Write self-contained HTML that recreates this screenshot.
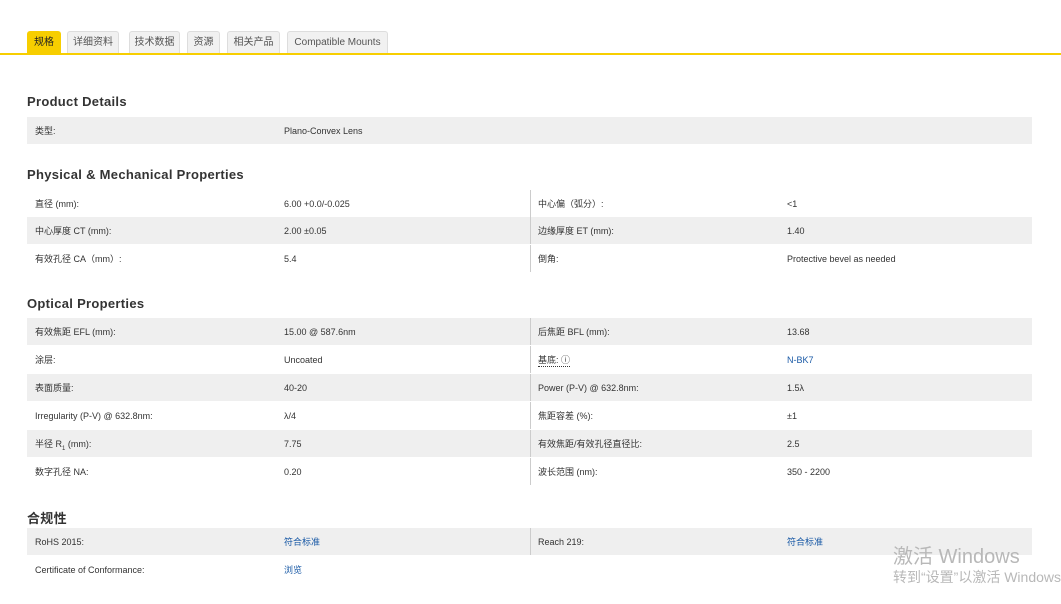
<!DOCTYPE html>
<html><head><meta charset="utf-8"><style>
*{margin:0;padding:0;box-sizing:border-box}
body{width:1061px;height:604px;background:#fff;font-family:"Liberation Sans","Noto Sans CJK SC",sans-serif;color:#333;position:relative;overflow:hidden;font-size:9px}
.tab{position:absolute;top:31px;height:23px;border:1px solid #ddd;border-bottom:none;background:#f1f1f1;border-radius:3px 3px 0 0;font-size:10px;line-height:22px;text-align:center;color:#555}
.tab.a{background:#f7ce00;border-color:#f7ce00;color:#222}
.line{position:absolute;top:53px;left:0;width:1061px;height:2px;background:#f7ce00}
h2{position:absolute;left:27px;font-size:13px;font-weight:bold;color:#333;letter-spacing:.3px}
.r{position:absolute;left:27px;width:1005px;height:27px;line-height:29px}
.g{background:#efefef}
.r span{position:absolute;top:0}
.c1{left:8px}.c2{left:257px}.c3{left:511px}.c4{left:760px}
.dv{position:absolute;left:503px;top:0;width:1px;height:27px;background:#ccc}
a{color:#1a5aa6;text-decoration:none}
.wm{position:absolute;left:893px;color:#b8b8b8;white-space:nowrap}
</style></head><body>
<div class="tab a" style="left:27px;width:34px">规格</div>
<div class="tab" style="left:67px;width:52px">详细资料</div>
<div class="tab" style="left:129px;width:51px">技术数据</div>
<div class="tab" style="left:187px;width:33px">资源</div>
<div class="tab" style="left:227px;width:53px">相关产品</div>
<div class="tab" style="left:287px;width:101px">Compatible Mounts</div>
<div class="line"></div>

<h2 style="top:94px">Product Details</h2>
<div class="r g" style="top:117px"><span class="c1">类型:</span><span class="c2">Plano-Convex Lens</span></div>

<h2 style="top:167px">Physical &amp; Mechanical Properties</h2>
<div class="r" style="top:190px"><span class="c1">直径 (mm):</span><span class="c2">6.00 +0.0/-0.025</span><div class="dv"></div><span class="c3">中心偏（弧分）:</span><span class="c4">&lt;1</span></div>
<div class="r g" style="top:217px"><span class="c1">中心厚度 CT (mm):</span><span class="c2">2.00 ±0.05</span><div class="dv"></div><span class="c3">边缘厚度 ET (mm):</span><span class="c4">1.40</span></div>
<div class="r" style="top:245px"><span class="c1">有效孔径 CA（mm）:</span><span class="c2">5.4</span><div class="dv"></div><span class="c3">倒角:</span><span class="c4">Protective bevel as needed</span></div>

<h2 style="top:296px">Optical Properties</h2>
<div class="r g" style="top:318px"><span class="c1">有效焦距 EFL (mm):</span><span class="c2">15.00 @ 587.6nm</span><div class="dv"></div><span class="c3">后焦距 BFL (mm):</span><span class="c4">13.68</span></div>
<div class="r" style="top:346px"><span class="c1">涂层:</span><span class="c2">Uncoated</span><div class="dv"></div><span class="c3" style="border-bottom:1px dotted #333;line-height:12px;top:8px">基底: ⓘ</span><span class="c4"><a>N-BK7</a></span></div>
<div class="r g" style="top:374px"><span class="c1">表面质量:</span><span class="c2">40-20</span><div class="dv"></div><span class="c3">Power (P-V) @ 632.8nm:</span><span class="c4">1.5λ</span></div>
<div class="r" style="top:402px"><span class="c1">Irregularity (P-V) @ 632.8nm:</span><span class="c2">λ/4</span><div class="dv"></div><span class="c3">焦距容差 (%):</span><span class="c4">±1</span></div>
<div class="r g" style="top:430px"><span class="c1">半径 R<sub style="font-size:6px">1</sub> (mm):</span><span class="c2">7.75</span><div class="dv"></div><span class="c3">有效焦距/有效孔径直径比:</span><span class="c4">2.5</span></div>
<div class="r" style="top:458px"><span class="c1">数字孔径 NA:</span><span class="c2">0.20</span><div class="dv"></div><span class="c3">波长范围 (nm):</span><span class="c4">350 - 2200</span></div>

<h2 style="top:508px">合规性</h2>
<div class="r g" style="top:528px"><span class="c1">RoHS 2015:</span><span class="c2"><a>符合标准</a></span><div class="dv"></div><span class="c3">Reach 219:</span><span class="c4"><a>符合标准</a></span></div>
<div class="r" style="top:556px"><span class="c1">Certificate of Conformance:</span><span class="c2"><a>浏览</a></span></div>

<div class="wm" style="top:540px;font-size:20px">激活 Windows</div>
<div class="wm" style="top:567px;font-size:14px">转到“设置”以激活 Windows。</div>
</body></html>
